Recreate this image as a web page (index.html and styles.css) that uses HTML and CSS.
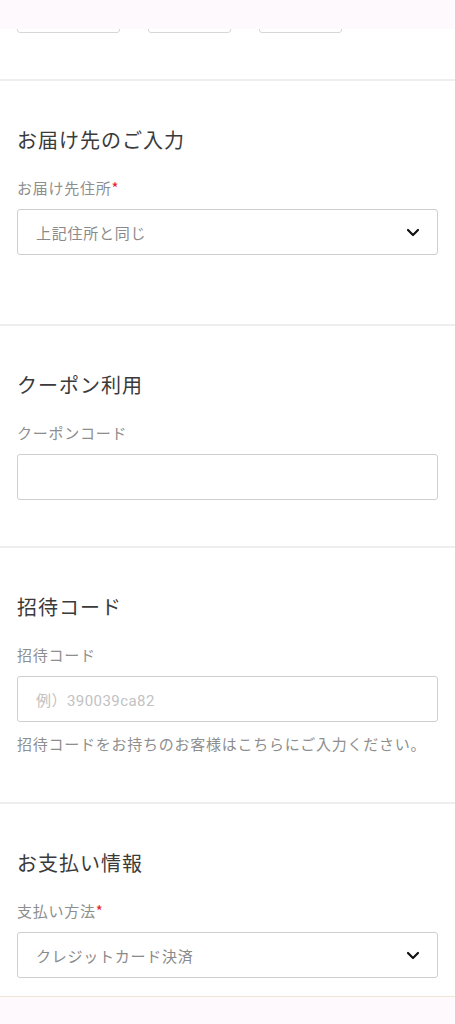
FILE: index.html
```html
<!DOCTYPE html>
<html lang="ja">
<head>
<meta charset="utf-8">
<link rel="stylesheet" href="styles.css">
</head>
<body>
<div class="topbar"></div>
<main class="page">
  <section class="section section--tail">
    <div class="date-row">
      <div class="date-box date-box--year"></div>
      <div class="date-box date-box--month"></div>
      <div class="date-box date-box--day"></div>
    </div>
  </section>

  <section class="section section--extra">
    <h2 class="heading">お届け先のご入力</h2>
    <label class="label">お届け先住所<span class="req">*</span></label>
    <div class="select">
      <span class="select-text">上記住所と同じ</span>
      <svg class="chev" width="14" height="9" viewBox="0 0 14 9"><path d="M2 2 L7 7 L12 2" fill="none" stroke="#111" stroke-width="2.2" stroke-linecap="round" stroke-linejoin="round"/></svg>
    </div>
  </section>

  <section class="section">
    <h2 class="heading">クーポン利用</h2>
    <label class="label">クーポンコード</label>
    <div class="input"></div>
  </section>

  <section class="section">
    <h2 class="heading">招待コード</h2>
    <label class="label">招待コード</label>
    <div class="input"><span class="placeholder">例）390039ca82</span></div>
    <p class="help">招待コードをお持ちのお客様はこちらにご入力ください。</p>
  </section>

  <section class="section">
    <h2 class="heading">お支払い情報</h2>
    <label class="label">支払い方法<span class="req">*</span></label>
    <div class="select">
      <span class="select-text">クレジットカード決済</span>
      <svg class="chev" width="14" height="9" viewBox="0 0 14 9"><path d="M2 2 L7 7 L12 2" fill="none" stroke="#111" stroke-width="2.2" stroke-linecap="round" stroke-linejoin="round"/></svg>
    </div>
  </section>
</main>
<div class="footerbar"></div>
</body>
</html>
```

FILE: styles.css
```css
* { box-sizing: border-box; margin: 0; padding: 0; }

html, body {
  background: #ffffff;
}

body {
  font-family: "Noto Sans CJK JP", "Noto Sans", sans-serif;
  color: #3c3c3c;
  width: 455px;
  height: 1024px;
  overflow: hidden;
}

.topbar {
  position: fixed;
  top: 0;
  left: 0;
  right: 0;
  height: 29px;
  background: #fef9fd;
  z-index: 10;
}

.footerbar {
  position: fixed;
  left: 0;
  right: 0;
  bottom: 0;
  height: 28px;
  background: #fef9fd;
  border-top: 1px solid #efe7d6;
  z-index: 10;
}

.page {
  display: flex;
  flex-direction: column;
}

.section {
  padding: 44px 17px 46px;
  border-bottom: 2px solid #eeeeee;
  display: flex;
  flex-direction: column;
}

.section--tail {
  padding-top: 0;
}

.section--extra {
  padding-bottom: 69px;
}

.section:last-child {
  border-bottom: none;
}

.date-row {
  display: flex;
}

.date-box {
  height: 33px;
  border: 1px solid #d6d6d6;
  border-radius: 3px;
}

.date-box--year { width: 103px; }
.date-box--month { width: 83px; margin-left: 28px; }
.date-box--day { width: 83px; margin-left: 28px; }

.heading {
  font-size: 20px;
  line-height: 30px;
  font-weight: 400;
  letter-spacing: 0.05em;
  color: #3a3a3a;
}

.label {
  margin-top: 22px;
  font-size: 15px;
  line-height: 22px;
  letter-spacing: 0.05em;
  color: #8e8e8e;
}

.req {
  color: #e8202a;
}

.select,
.input {
  margin-top: 10px;
  height: 46px;
  border: 1px solid #cfcfcf;
  border-radius: 3px;
  display: flex;
  align-items: center;
  padding: 0 17px 0 18px;
}

.select {
  justify-content: space-between;
}

.select-text {
  font-size: 15px;
  letter-spacing: 0.05em;
  color: #8a8a8a;
}

.placeholder {
  font-family: Roboto, "Noto Sans CJK JP", sans-serif;
  font-size: 15px;
  letter-spacing: 0.03em;
  color: #c2c2c2;
}

.chev {
  display: block;
}

.help {
  margin-top: 10px;
  font-size: 15px;
  line-height: 24px;
  letter-spacing: 0.05em;
  color: #8e8e8e;
}
```
